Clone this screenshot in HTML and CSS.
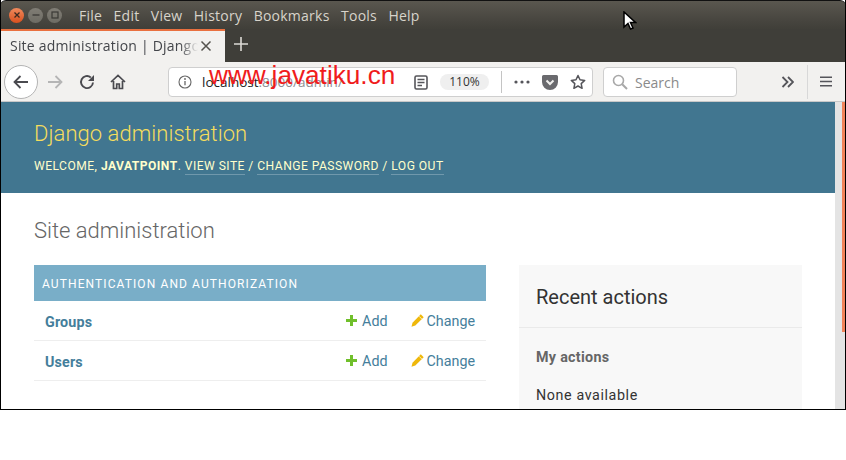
FILE: index.html
```html
<!DOCTYPE html>
<html lang="en">
<head>
<meta charset="utf-8">
<title>Site administration</title>
<link rel="stylesheet" href="styles.css">
</head>
<body>
<div class="window">
  <div class="titlebar">
    <div class="winbtns">
      <span class="wb close"><svg width="8" height="8" viewBox="0 0 8 8"><path d="M1.500 1.500l5 5M6.500 1.500l-5 5" stroke="#3d2a20" stroke-width="1.300"/></svg></span>
      <span class="wb"><svg width="8" height="8" viewBox="0 0 8 8"><path d="M0.500 4h7" stroke="#3a3935" stroke-width="1.300"/></svg></span>
      <span class="wb"><svg width="8" height="8" viewBox="0 0 8 8"><rect x="1" y="1" width="6" height="6" fill="none" stroke="#3a3935" stroke-width="1.200"/></svg></span>
    </div>
    <nav class="menus"><span>File</span><span>Edit</span><span>View</span><span>History</span><span>Bookmarks</span><span>Tools</span><span>Help</span></nav>
  </div>
  <div class="tabbar">
    <div class="tab">
      <span class="tabtitle">Site administration | Django</span>
      <svg class="tabx" width="12" height="12" viewBox="0 0 12 12"><path d="M1.500 1.500l9 9M10.500 1.500l-9 9" stroke="#55534e" stroke-width="1.500"/></svg>
    </div>
    <svg class="newtab" width="14" height="14" viewBox="0 0 14 14"><path d="M7 0v14M0 7h14" stroke="#dcdad5" stroke-width="1.600"/></svg>
  </div>
  <div class="toolbar">
    <span class="backbtn"><svg width="18" height="16" viewBox="0 0 18 16"><path d="M16 8H2.500M8.500 2L2.500 8l6 6" fill="none" stroke="#4a4a4f" stroke-width="1.800"/></svg></span>
    <svg class="tb forward" width="18" height="16" viewBox="0 0 18 16"><path d="M2 8h13.500M9.500 2l6 6-6 6" fill="none" stroke="#b5b5b5" stroke-width="1.800"/></svg>
    <svg class="tb reload" width="16" height="16" viewBox="0 0 16 16"><path d="M14 8.500A6 6 0 1 1 11.800 3.400" fill="none" stroke="#4a4a4f" stroke-width="1.900"/><path d="M15 1v6H9z" fill="#4a4a4f"/></svg>
    <svg class="tb home" width="16" height="16" viewBox="0 0 16 16"><path d="M1 8l7-6.500L15 8M3.500 7v7.500h3.200V10h2.600v4.500h3.200V7" fill="none" stroke="#4a4a4f" stroke-width="1.700"/></svg>
    <div class="urlbar">
      <svg class="info" width="14" height="14" viewBox="0 0 14 14"><circle cx="7" cy="7" r="6" fill="none" stroke="#666" stroke-width="1.100"/><path d="M7 6v4.200" stroke="#666" stroke-width="1.300"/><circle cx="7" cy="4" r=".9" fill="#666"/></svg>
      <span class="url">localhost<span class="urldim">:8000/admin/</span></span>
      <svg class="reader" width="14" height="15" viewBox="0 0 14 15"><rect x="1" y="1" width="12" height="13" rx="1.500" fill="none" stroke="#55555a" stroke-width="1.600"/><path d="M3.500 4.500h7M3.500 7.500h7M3.500 10.500h4.500" stroke="#55555a" stroke-width="1.300"/></svg>
      <span class="zoom">110%</span>
      <span class="urlsep"></span>
      <svg class="dots" width="16" height="4" viewBox="0 0 16 4"><circle cx="2" cy="2" r="1.600" fill="#55555a"/><circle cx="8" cy="2" r="1.600" fill="#55555a"/><circle cx="14" cy="2" r="1.600" fill="#55555a"/></svg>
      <svg class="pocket" width="16" height="15" viewBox="0 0 16 15"><path d="M1.500 0h13A1.500 1.500 0 0 1 16 1.500V7a8 8 0 0 1-16 0V1.500A1.500 1.500 0 0 1 1.500 0z" fill="#6a6a6e"/><path d="M4.500 5.500L8 9l3.500-3.500" fill="none" stroke="#f1f0ee" stroke-width="2"/></svg>
      <svg class="star" width="16" height="16" viewBox="0 0 16 16"><path d="M8 1.500l2 4.300 4.700.6-3.500 3.200.9 4.700L8 12l-4.100 2.300.9-4.700L1.300 6.400 6 5.800z" fill="none" stroke="#55555a" stroke-width="1.500" stroke-linejoin="round"/></svg>
    </div>
    <div class="searchbar">
      <svg width="16" height="16" viewBox="0 0 16 16"><circle cx="6.500" cy="6.500" r="5" fill="none" stroke="#a8a8a8" stroke-width="1.600"/><path d="M10.200 10.200L15 15" stroke="#a8a8a8" stroke-width="2"/></svg>
      <span>Search</span>
    </div>
    <svg class="overflow" width="13" height="12" viewBox="0 0 13 12"><path d="M1.500 1l5 5-5 5M7 1l5 5-5 5" fill="none" stroke="#55555a" stroke-width="1.800"/></svg>
    <span class="tbsep"></span>
    <svg class="burger" width="12" height="11" viewBox="0 0 12 11"><path d="M0 1.200h12M0 5.500h12M0 9.800h12" stroke="#55555a" stroke-width="1.600"/></svg>
  </div>
  <div class="viewport">
    <div class="page">
      <header class="dj-header">
        <h1 class="branding">Django administration</h1>
        <div class="usertools">Welcome, <strong>javatpoint</strong>. <a>View site</a> / <a>Change password</a> / <a>Log out</a></div>
      </header>
      <main class="content">
        <h2 class="pagetitle">Site administration</h2>
        <div class="columns">
          <section class="module">
            <div class="caption">Authentication and Authorization</div>
            <div class="row">
              <a class="model">Groups</a>
              <span class="act add"><svg width="11" height="11" viewBox="0 0 11 11"><path d="M5.500 0v11M0 5.500h11" stroke="#70bf2b" stroke-width="3"/></svg>Add</span>
              <span class="act change"><svg width="13" height="13" viewBox="0 0 13 13"><path d="M9.800.3l2.900 2.900-8.400 8.400-3.800 1.100 1-3.900z" fill="#efb80b"/><path d="M8 2.200l2.800 2.800" stroke="#fff" stroke-width=".7"/></svg>Change</span>
            </div>
            <div class="row">
              <a class="model">Users</a>
              <span class="act add"><svg width="11" height="11" viewBox="0 0 11 11"><path d="M5.500 0v11M0 5.500h11" stroke="#70bf2b" stroke-width="3"/></svg>Add</span>
              <span class="act change"><svg width="13" height="13" viewBox="0 0 13 13"><path d="M9.800.3l2.900 2.900-8.400 8.400-3.800 1.100 1-3.900z" fill="#efb80b"/><path d="M8 2.200l2.800 2.800" stroke="#fff" stroke-width=".7"/></svg>Change</span>
            </div>
          </section>
          <aside class="recent">
            <h2 class="recent-title">Recent actions</h2>
            <h3 class="myactions">My actions</h3>
            <p class="none">None available</p>
          </aside>
        </div>
      </main>
    </div>
    <div class="scrollbar"><div class="thumb"></div></div>
  </div>
  <div class="watermark">www.javatiku.cn</div>
  <svg class="cursor" width="14" height="20" viewBox="0 0 14 20"><path d="M1 1v15l4-3.500 2.500 5.500 2.500-1-2.500-5.500H12.500z" fill="#fff" stroke="#000" stroke-width="1.500"/></svg>
</div>
</body>
</html>
```

FILE: styles.css
```css
* { box-sizing: border-box; }
html, body { margin: 0; padding: 0; background: #fff; overflow: hidden; }
body { width: 846px; height: 460px; font-family: Roboto, sans-serif; }
.window {
  position: relative;
  width: 846px;
  height: 410px;
  display: flex;
  flex-direction: column;
  overflow: hidden;
  border-left: 1px solid #000;
  border-right: 1px solid #000;
  border-bottom: 1px solid #000;
}
.titlebar {
  height: 29px;
  flex: none;
  display: flex;
  align-items: center;
  margin: 0 -1px;
  padding-left: 9px;
  border-top: 1px solid #111;
  border-radius: 6px 6px 0 0;
  background: linear-gradient(#5a574f, #47453f 70%, #403f39);
  font-family: "Open Sans", sans-serif;
}
.winbtns { display: flex; gap: 4px; width: 70px; }
.wb {
  width: 15px; height: 15px; border-radius: 50%;
  background: linear-gradient(#807d75, #6e6c64);
  display: flex; align-items: center; justify-content: center;
}
.wb.close { background: linear-gradient(#f08a5d, #d9501e); }
.menus { display: flex; gap: 11.400px; font-size: 14px; letter-spacing: .25px; color: #d8d4cb; }
.tabbar {
  height: 33px; flex: none; display: flex; align-items: center;
  background: #3f3e39;
  margin: 0 -1px;
}
.tab {
  width: 225px; height: 33px; flex: none;
  display: flex; align-items: center;
  background: #f2f1ef;
  border-top: 2px solid #e9703f;
  padding: 0 0 2px 10px;
}
.tabtitle {
  width: 188px; overflow: hidden; white-space: nowrap;
  font: 14px "Open Sans", sans-serif; letter-spacing: .2px; color: #43454a;
  -webkit-mask-image: linear-gradient(90deg, #000 170px, transparent 188px);
  mask-image: linear-gradient(90deg, #000 170px, transparent 188px);
}
.tabx { margin-left: 2px; }
.newtab { margin-left: 9px; margin-bottom: 3px; }
.toolbar {
  height: 40px; flex: none; display: flex; align-items: center;
  background: #f2f1ef;
  border-bottom: 1px solid #c8c8c8;
  padding-left: 3px;
  font-family: "Open Sans", sans-serif;
}
.backbtn {
  width: 34px; height: 34px; border-radius: 50%;
  border: 1px solid #b4b4b4; background: #fff;
  display: flex; align-items: center; justify-content: center; flex: none;
}
.forward { margin-left: 8px; }
.reload { margin-left: 15px; }
.home { margin-left: 15px; }
.urlbar {
  width: 425px; height: 30px; margin: 1px 0 0 42px; flex: none;
  display: flex; align-items: center;
  background: #fff; border: 1px solid #cfcfcf; border-radius: 4px;
  padding-left: 9px;
}
.url { width: 212px; margin-left: 10px; font-size: 13.500px; color: #222; white-space: nowrap; overflow: hidden; }
.urldim { color: #8e8e93; }
.zoom {
  width: 49px; height: 16px; margin-left: 12px; border-radius: 8px;
  background: #efefef; font-size: 12px; line-height: 16px; text-align: center; color: #333;
}
.urlsep { width: 1px; height: 22px; background: #c4c4c4; margin-left: 12px; }
.dots { margin-left: 12px; }
.pocket { margin-left: 12px; }
.star { margin-left: 12px; }
.searchbar {
  width: 134px; height: 30px; margin: 1px 0 0 10px; flex: none;
  display: flex; align-items: center; gap: 7px;
  background: #fff; border: 1px solid #cfcfcf; border-radius: 4px;
  padding-left: 8px;
  font-size: 14px; color: #8a8a8a;
}
.overflow { margin-left: 44px; }
.tbsep { width: 1px; height: 34px; background: #d8d8d8; margin-left: 13px; }
.burger { margin-left: 12px; }
.viewport { flex: 1; display: flex; min-height: 0; overflow: hidden; }
.page { flex: 1; min-width: 0; background: #fff; }
.dj-header {
  height: 91px; background: #417690; padding: 19px 33px 0;
  color: #ffc;
}
.branding { margin: 0; font-size: 22px; line-height: 26px; font-weight: 300; letter-spacing: .05px; color: #f5dd5d; }
.usertools {
  margin-top: 11px; font-size: 12.100px; line-height: 16px;
  letter-spacing: .46px; text-transform: uppercase; color: #ffc; white-space: nowrap;
}
.usertools strong { font-weight: 700; }
.usertools a { border-bottom: 1px solid rgba(255,255,255,.25); padding-bottom: 1px; }
.content { padding: 0 33px; }
.pagetitle { margin: 0; padding-top: 23px; font-size: 22px; line-height: 30px; font-weight: 300; color: #666; height: 72px; }
.columns { display: flex; gap: 33px; align-items: flex-start; }
.module { width: 452px; flex: none; }
.caption {
  height: 36px; line-height: 38px; background: #79aec8; color: #fff;
  padding-left: 8px; font-size: 12px; letter-spacing: 1.100px; text-transform: uppercase; white-space: nowrap;
}
.row {
  height: 40px; display: flex; align-items: center;
  border-bottom: 1px solid #eee; padding: 0 11px 0 11px;
  font-size: 14.300px;
}
.model { font-weight: 700; color: #447e9b; flex: 1; padding-top: 2px; letter-spacing: .15px; }
.act { color: #447e9b; display: flex; align-items: center; }
.add svg { margin-right: 5px; }
.change { margin-left: 23px; }
.change svg { margin-right: 3px; }
.recent { width: 283px; flex: none; height: 160px; background: #f8f8f8; padding: 0 17px; margin: 0 -17px 0 0; }
.recent-title {
  margin: 0 -17px; padding: 0 17px; height: 63px; line-height: 64px;
  font-size: 20px; font-weight: 400; color: #333;
  border-bottom: 1px solid #eaeaea;
}
.myactions { margin: 20px 0 0; font-size: 14.300px; line-height: 18px; font-weight: 700; letter-spacing: .3px; color: #666; }
.none { margin: 20px 0 0; font-size: 14.300px; line-height: 18px; letter-spacing: .6px; color: #333; }
.scrollbar { width: 10px; flex: none; background: #e4e4e4; }
.thumb { width: 3px; height: 230px; margin-left: 7px; background: #f0835a; }
.watermark {
  position: absolute; left: 208px; top: 60px;
  font-family: "Liberation Sans", sans-serif; font-size: 26.200px; line-height: 30px;
  color: #f01c1c; white-space: nowrap;
}
.cursor { position: absolute; left: 622px; top: 11px; }
```
